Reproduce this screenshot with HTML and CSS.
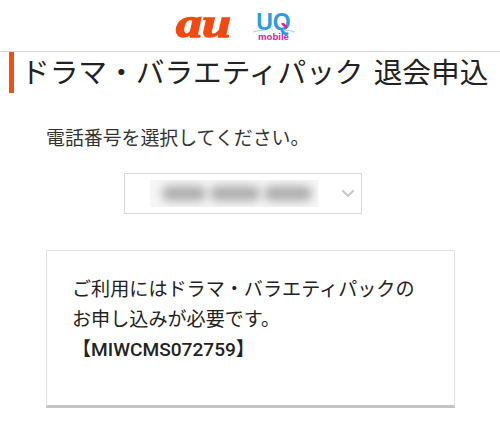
FILE: index.html
```html
<!DOCTYPE html>
<html lang="ja">
<head>
  <meta charset="utf-8">
  <title>ドラマ・バラエティパック 退会申込</title>
  <link rel="stylesheet" href="styles.css">
</head>
<body>
  <header class="site-header">
    <div class="logo-au"><span class="logo-au-text">au</span></div>
    <div class="logo-uq">
      <span class="logo-uq-mark">UQ</span>
      <span class="logo-uq-sub">mobile</span>
      <svg class="logo-uq-swoosh" width="44" height="10" viewBox="0 0 44 10">
        <path d="M1 9 Q8 7 13 7 M31 7 Q37 7 43 9" fill="none" stroke="#9fd2f5" stroke-width="1.2"/>
        <path d="M30 0 L35 5" fill="none" stroke="#e0218a" stroke-width="2.6"/>
      </svg>
    </div>
  </header>

  <h1 class="page-title">ドラマ・バラエティパック 退会申込</h1>

  <p class="select-label">電話番号を選択してください。</p>

  <div class="phone-select">
    <div class="phone-blur">
      <span class="blur-part part-a"></span>
      <span class="blur-part part-b"></span>
      <span class="blur-part part-c"></span>
    </div>
    <svg class="phone-arrow" width="14" height="9" viewBox="0 0 14 9">
      <path d="M1.5 1.5 L7 7 L12.5 1.5" fill="none" stroke="#c9c9c9" stroke-width="2.2"/>
    </svg>
  </div>

  <div class="notice-box">
    <p>ご利用にはドラマ・バラエティパックの<br>お申し込みが必要です。<br><strong>【MIWCMS072759】</strong></p>
  </div>
</body>
</html>
```

FILE: styles.css
```css
body {
  margin: 0;
  font-family: Roboto, "Noto Sans CJK JP", sans-serif;
  color: #222;
  background: #fff;
  overflow: hidden;
}

.site-header {
  height: 51px;
  border-bottom: 1px solid #d9d9d9;
  display: flex;
  justify-content: center;
  align-items: flex-start;
  gap: 25px;
  padding-right: 34px;
}

.logo-au {
  width: 56px;
}

.logo-au-text {
  display: inline-block;
  font-family: "Liberation Serif", serif;
  font-style: italic;
  font-weight: bold;
  font-size: 40px;
  color: #f04a12;
  -webkit-text-stroke: 1.4px #f04a12;
  transform: scaleX(1.3);
  transform-origin: left;
}

.logo-uq {
  position: relative;
  display: flex;
  flex-direction: column;
  align-items: center;
  width: 33px;
  margin-top: 12px;
}

.logo-uq-mark {
  font-family: "Liberation Sans", sans-serif;
  font-weight: bold;
  font-size: 23px;
  line-height: 20px;
  color: #2b9be8;
  white-space: nowrap;
}

.logo-uq-sub {
  font-family: "Liberation Sans", sans-serif;
  font-weight: bold;
  font-size: 9.6px;
  line-height: 9px;
  color: #d6249f;
}

.logo-uq-swoosh {
  position: absolute;
  left: -5px;
  top: 11px;
}

.page-title {
  margin: 0 0 0 9px;
  padding-left: 7px;
  height: 41px;
  border-left: 5px solid #f04e12;
  font-size: 28.7px;
  font-weight: 400;
  line-height: 43px;
  word-spacing: 3px;
  white-space: nowrap;
}

.select-label {
  margin: 33px 0 0 46px;
  font-size: 18.9px;
  line-height: 26px;
  color: #333;
}

.phone-select {
  margin: 21px 0 0 124px;
  width: 238px;
  height: 41px;
  box-sizing: border-box;
  border: 1px solid #d8d8d8;
  display: flex;
  align-items: center;
  justify-content: space-between;
  padding: 0 6px 0 25px;
}

.phone-blur {
  width: 168px;
  height: 27px;
  overflow: hidden;
  background: #f6f6f6;
  display: flex;
  align-items: center;
  gap: 4px;
  padding-left: 12px;
  box-sizing: border-box;
}

.blur-part {
  height: 15px;
  background: #adadad;
  border-radius: 7px;
  filter: blur(5px);
}

.part-a {
  width: 44px;
}

.part-b {
  width: 50px;
}

.part-c {
  width: 48px;
}

.notice-box {
  margin: 36px 0 0 46px;
  width: 409px;
  height: 158px;
  box-sizing: border-box;
  border: 1px solid #e2e2e2;
  border-bottom: 3px solid #c4c4c4;
  padding: 24px 25px 0;
}

.notice-box p {
  margin: 0;
  font-size: 19.1px;
  line-height: 30px;
  white-space: nowrap;
}

.notice-box strong {
  font-weight: 500;
}
```
